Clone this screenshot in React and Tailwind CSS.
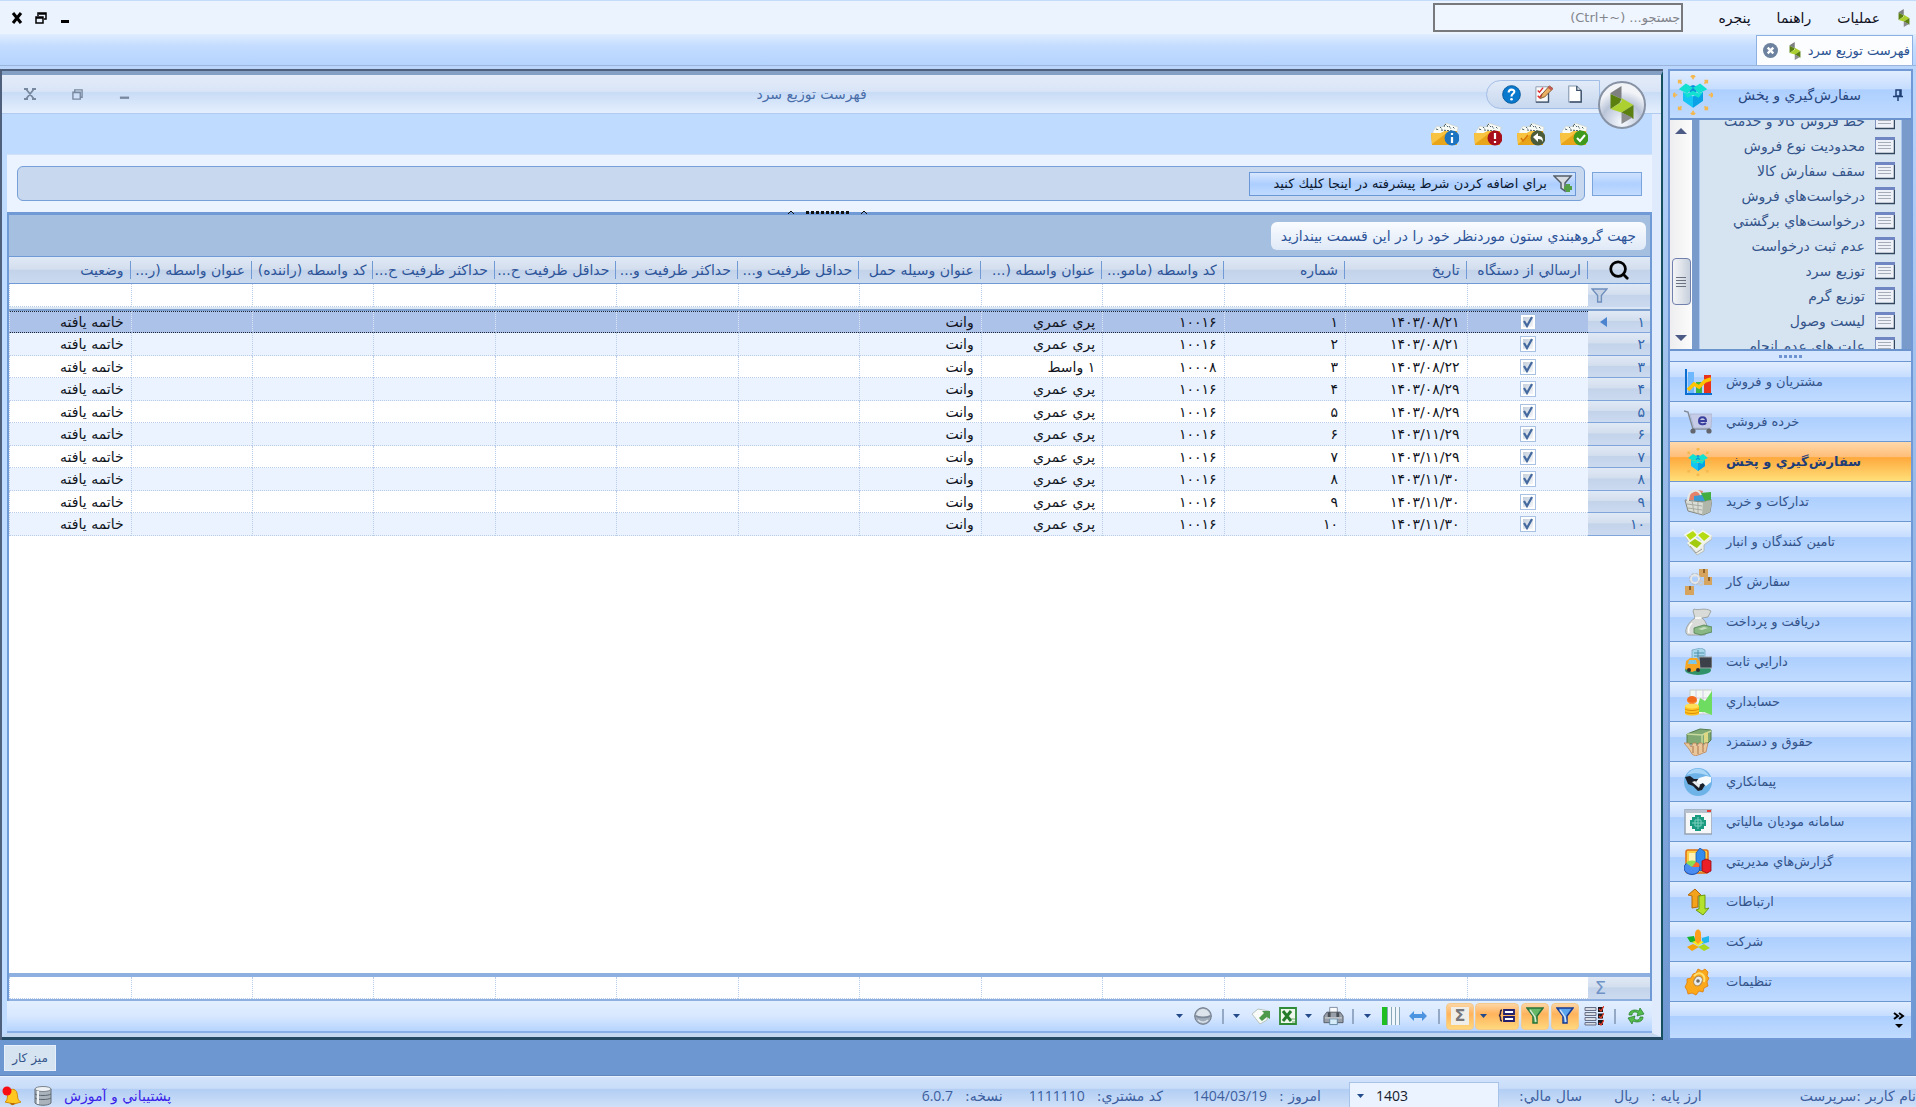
import { Search } from "lucide-react";

const modules = [
  { label: "مشتريان و فروش", icon: "sales" },
  { label: "خرده فروشي", icon: "cart" },
  { label: "سفارش‌گيري و پخش", icon: "box", active: true },
  { label: "تداركات و خريد", icon: "basket" },
  { label: "تامين كنندگان و انبار", icon: "pallets" },
  { label: "سفارش كار", icon: "workOrder" },
  { label: "دريافت و پرداخت", icon: "moneyBag" },
  { label: "دارايي ثابت", icon: "assets" },
  { label: "حسابداري", icon: "accounting" },
  { label: "حقوق و دستمزد", icon: "payroll" },
  { label: "پيمانكاري", icon: "contract" },
  { label: "سامانه موديان مالياتي", icon: "tax" },
  { label: "گزارش‌هاي مديريتي", icon: "reports" },
  { label: "ارتباطات", icon: "links" },
  { label: "شركت", icon: "company" },
  { label: "تنظيمات", icon: "settings" },
];

const treeItems = [
  "خط فروش كالا و خدمت",
  "محدوديت نوع فروش",
  "سقف سفارش كالا",
  "درخواست‌هاي فروش",
  "درخواست‌هاي برگشتي",
  "عدم ثبت درخواست",
  "توزيع سرد",
  "توزيع گرم",
  "ليست وصول",
  "علت هاي عدم انجام",
];

const columns = [
  "ارسالي از دستگاه",
  "تاريخ",
  "شماره",
  "كد واسطه (مامو...",
  "عنوان واسطه (...",
  "عنوان وسيله حمل",
  "حداقل ظرفيت و...",
  "حداكثر ظرفيت و...",
  "حداقل ظرفيت ح...",
  "حداكثر ظرفيت ح...",
  "كد واسطه (راننده)",
  "عنوان واسطه (ر...",
  "وضعيت",
];

const rows = [
  { no: "۱", date: "۱۴۰۳/۰۸/۲۱", code: "۱۰۰۱۶", agent: "پري عمري" },
  { no: "۲", date: "۱۴۰۳/۰۸/۲۱", code: "۱۰۰۱۶", agent: "پري عمري" },
  { no: "۳", date: "۱۴۰۳/۰۸/۲۲", code: "۱۰۰۰۸", agent: "۱ واسط" },
  { no: "۴", date: "۱۴۰۳/۰۸/۲۹", code: "۱۰۰۱۶", agent: "پري عمري" },
  { no: "۵", date: "۱۴۰۳/۰۸/۲۹", code: "۱۰۰۱۶", agent: "پري عمري" },
  { no: "۶", date: "۱۴۰۳/۱۱/۲۹", code: "۱۰۰۱۶", agent: "پري عمري" },
  { no: "۷", date: "۱۴۰۳/۱۱/۲۹", code: "۱۰۰۱۶", agent: "پري عمري" },
  { no: "۸", date: "۱۴۰۳/۱۱/۳۰", code: "۱۰۰۱۶", agent: "پري عمري" },
  { no: "۹", date: "۱۴۰۳/۱۱/۳۰", code: "۱۰۰۱۶", agent: "پري عمري" },
  { no: "۱۰", date: "۱۴۰۳/۱۱/۳۰", code: "۱۰۰۱۶", agent: "پري عمري" },
];

const glossy =
  "bg-[linear-gradient(#e1edff,#c6ddff_38%,#adcfff_40%,#c0dbff)]";
const silver =
  "bg-[linear-gradient(#e0e9f5,#d3deee_45%,#c3d3ea_50%,#cbdaef)]";

const moduleIcons = {
  sales: (
    <>
      <path d="M2 1v25h26" fill="none" stroke="#0a6fd0" strokeWidth="2" />
      <path d="M4 4h6v21H4z" fill="#6db8ff" />
      <path d="M12 14h6v11h-6z" fill="#39b54a" />
      <path d="M20 7h7v18h-7z" fill="#e8341c" />
      <path d="m4 22 6-6 5 3 6-6 6-2" fill="none" stroke="#ffc400" strokeWidth="3.500" />
    </>
  ),
  cart: (
    <>
      <path d="m0 3 4 1 5 17h17" fill="none" stroke="#858b96" strokeWidth="1.500" />
      <path d="M6 6h22l-1 14H10z" fill="#c5cbe6" stroke="#aab1ca" strokeWidth=".7" />
      <path d="M15 13h7c0-5-7-5-7 0 0 4 5 4 7 2" fill="none" stroke="#3a3f9e" strokeWidth="2" />
      <circle cx="9" cy="23" r="2.600" fill="#63666c" />
      <circle cx="25" cy="23" r="2.600" fill="#63666c" />
    </>
  ),
  box: (
    <>
      <path d="m7 12 7 3 7-3v6l-7 5-7-5z" fill="#16c4f4" />
      <path d="m14 15 7-3v6l-7 5z" fill="#0aa1e6" />
      <path d="m9 9 5-2 5 2-5 5z" fill="#0d8fdc" />
      <path d="m9 6 5 3-4 4-6-3zM19 6l-5 3 4 4 6-3z" fill="#12e0d0" />
      <path d="m7 12 3 1 4-2 4 2 3-1-3 4-4-2-4 2z" fill="#12e0d0" />
      <path
        d="M14 3V0m-1.500 1.500L14 0l1.500 1.500M14 25v3m-1.500-1.500L14 28l1.500-1.500M3 14H0m1.500-1.500L0 14l1.500 1.500M25 14h3m-1.500-1.500L28 14l-1.500 1.500M6 6 4 4m0 2V4h2m16 2 2-2m-2 0h2v2M6 22l-2 2m0-2v2h2m16-2 2 2m-2 0h2v-2"
        fill="none"
        stroke="#f5b84e"
        strokeWidth="1.200"
      />
    </>
  ),
  basket: (
    <>
      <path d="m6 6 8-4 5 1-3 9H5z" fill="#e5826a" />
      <path d="m16 5 11-1v8l-10 2z" fill="#43ad3f" />
      <path d="m10 8 8-1 3 6-11 1z" fill="#3c9bd2" />
      <path d="m1 12 18 2 9-2-2 12-7 3L4 23z" fill="#d9ddd6" stroke="#83877e" />
      <path d="m19 14-1 13 8-3 2-12z" fill="#b1b6ab" />
      <path d="m3 16 15 2M4 20l14 2M8 13l2 11M14 14v12" stroke="#a6aaa0" fill="none" />
      <path d="M4 13C4 2 14-1 17 7" fill="none" stroke="#e6e8e4" strokeWidth="2" />
    </>
  ),
  pallets: (
    <>
      <path d="m1 8 4 6-1 3 9 10 7-4v-6l8-6V8l-7 5-4-1-5 7-8-8-3-3z" fill="#eceeea" stroke="#a8b0a3" strokeWidth=".7" />
      <path d="m1 7 8-5 5 5-8 6z" fill="#b5dc12" stroke="#f4f6ea" strokeWidth="1.500" />
      <path d="m13 7 6-4 8 5-7 6z" fill="#b5dc12" stroke="#f4f6ea" strokeWidth="1.500" />
      <path d="m4 15 7-5 8 5-6 6z" fill="#a2cb10" stroke="#f4f6ea" strokeWidth="1.500" />
      <path d="m6 18 6 7 6-4" fill="none" stroke="#9a9f94" />
    </>
  ),
  workOrder: (
    <>
      <path d="M15 1h9v8h-9zM20 9h8v8h-8zM1 18h9v9H1z" fill="#d6a45c" />
      <path d="M19 1h2v4h-2zM24 9h2v4h-2zM5 18h2v4H5z" fill="#8f612b" />
      <circle cx="11" cy="11" r="4.500" fill="none" stroke="#b9bec4" strokeWidth="3" strokeDasharray="2.500 1" />
      <circle cx="11" cy="11" r="4" fill="none" stroke="#e4e6e8" strokeWidth="2" />
      <circle cx="17" cy="15" r="2" fill="none" stroke="#c6cacf" strokeWidth="2" />
    </>
  ),
  moneyBag: (
    <>
      <path d="M10 1c4 2 11-2 17 2l-3 6-6 1c6 5 6 11 3 17H4C-1 25 3 15 11 10L9 3z" fill="#d8dbd7" stroke="#92968f" strokeWidth=".8" />
      <path d="M11 10h6M8 15c-4 4-4 7-3 10" fill="none" stroke="#fff" strokeWidth="1.500" />
      <path d="m10 20 10-3 8 2v5l-11 3-7-2z" fill="#8ab884" stroke="#4e8050" strokeWidth=".8" />
      <path d="m14 21 6-2 4 1-6 2z" fill="#c6ddbf" />
    </>
  ),
  assets: (
    <>
      <ellipse cx="14" cy="22" rx="13" ry="5" fill="#2f9268" />
      <path d="M8 2 17 0l4 2v14H8z" fill="#a8d7ec" stroke="#5d96b1" strokeWidth=".6" />
      <path d="M10 5h10M10 8h10M14 2v12" stroke="#4f8eab" />
      <path d="M15 9h13v11H16z" fill="#3c4048" stroke="#9ea2a8" />
      <path d="m2 13 4-3h7l3 4v7l-8 3-7-3z" fill="#f6a623" />
      <path d="M5 12h7l1 4H4z" fill="#7cc6ea" />
      <circle cx="5" cy="22" r="2" fill="#333" />
      <circle cx="14" cy="22" r="2" fill="#333" />
    </>
  ),
  accounting: (
    <>
      <path d="M6 2h22v24H6z" fill="#f4f8f4" stroke="#c6cdc6" />
      <path d="M12 2v24M19 2v24M6 10h22" stroke="#d0c8e0" />
      <path d="m16 10 5 3 7-10v24l-8-3h-8z" fill="#6edc60" />
      <path d="M1 18h14v8c-3 2-11 2-14 0z" fill="#ffc423" />
      <ellipse cx="8" cy="18" rx="7" ry="2.500" fill="#ffdf58" />
      <path d="M1 21c3 2 11 2 14 0M1 24c3 2 11 2 14 0" fill="none" stroke="#dc8d06" />
      <ellipse cx="8" cy="12" rx="5" ry="4" fill="#f26a1b" />
      <path d="M3 13c2 3 8 3 10 0" fill="none" stroke="#ffad42" />
    </>
  ),
  payroll: (
    <>
      <path d="m3 6 13-5 11 1v10l-4 4H3z" fill="#7fa873" stroke="#557d4c" />
      <path d="m3 6 15 1 9-4M18 7v9" fill="none" stroke="#c8d99d" strokeWidth="1.500" />
      <path d="m20 5 4-1v10l-4 1z" fill="#dcd884" />
      <path d="M0 15h5l2 4 2-4h3l1 3 2-3h3l1 3 2-3h3l-2 9-3 1-2 1-3 1-3 1-3-2-3-5z" fill="#e9c79a" stroke="#b9855a" strokeWidth=".8" />
      <path d="M9 18v7m5-7v8m5-8v6" stroke="#a8754c" />
    </>
  ),
  contract: (
    <>
      <circle cx="14" cy="14" r="14" fill="#6eb3e8" />
      <path d="M3 7c5-9 18-8 22 1-7-3-15-4-22-1z" fill="#a9d6f6" />
      <path d="m1 9 5-1 4 3h5l6 6-3 5-4 1-5-5-5-2z" fill="#1a1f27" />
      <path d="m27 9-5-1-7 2-3 4 3 3 4-2 3 3 5-4z" fill="#f7fafc" />
      <path d="m8 14 3-1 5 4-1 3z" fill="#e9edf0" />
    </>
  ),
  tax: (
    <>
      <path d="M1 2h27v24H1z" fill="#f5f7f8" stroke="#97a4b2" strokeWidth="1.500" />
      <path d="M1 2h27v3H1z" fill="#b9c3cf" />
      <path d="M23 2h4v2h-4z" fill="#e23c34" />
      <path d="M11 7h6v2h3v3h2v6h-2v3h-3v2h-6v-2H8v-3H6v-6h2V9h3z" fill="#1a9a80" />
      <path d="M11 12h6v6h-6zM14 9v12M8 15h12" fill="none" stroke="#7dd1bf" />
    </>
  ),
  reports: (
    <>
      <rect x="2" y="2" width="22" height="23" rx="2" fill="#ffcf45" stroke="#df6f12" strokeWidth="1.500" />
      <path d="M5 5h15v15H5z" fill="#fff2b4" />
      <path d="m12 5 4-5 5 4v17l-4 2-5-2z" fill="#328cf0" stroke="#1556ac" strokeWidth=".8" />
      <path d="m18 13 4-2 5 2v10l-4 2-5-2z" fill="#ea1f28" stroke="#960910" strokeWidth=".8" />
      <ellipse cx="8" cy="20" rx="8" ry="6.500" fill="#4b8cf0" stroke="#174fae" />
      <path d="M8 19 2 15c3-3 8-3 10-1z" fill="#8be052" />
      <path d="m8 19 4-5c4 1 4 4 3 5z" fill="#ff6a2a" />
    </>
  ),
  links: (
    <>
      <path d="m4 7 7-6 6 6-3 1v11l-6 1V8z" fill="#f3a21c" stroke="#b3690c" />
      <path d="m15 8 6-1v14l4-1-6 7-7-5 3-1z" fill="#b4e22b" stroke="#6c9a12" />
    </>
  ),
  company: (
    <>
      <path d="m3 9 7-1 2 7-6-1z" fill="#18b52c" />
      <path d="m18 10 7-2v6l-7 2z" fill="#22b6ec" />
      <path d="m3 19 6-3 6 3-7 4z" fill="#f5a40c" />
      <path d="m14 19 6-3 6 4-6 3z" fill="#aad81f" />
      <path d="m8 14 6-2 6 2-6 4z" fill="#f8e71a" />
      <path d="M11 6c0-6 6-6 6 0v7l-3 3-3-3z" fill="#ff9e1a" />
    </>
  ),
  settings: (
    <>
      <path d="m9 6 3-1 2-4 4 2 3-2 3 3-1 4 2 2-2 4 1 4-4 2-1 4-4-1-3 4-4-2-4 1-1-4-2-3 2-4v-4l4-1z" fill="#fba91a" stroke="#e07b08" strokeWidth=".8" />
      <path d="M10 8c6-6 12-1 10 6" fill="none" stroke="#ffdf70" strokeWidth="2" />
      <ellipse cx="14" cy="13" rx="4" ry="5" fill="#e8ecef" stroke="#a5865a" transform="rotate(30 14 13)" />
      <circle cx="14" cy="13" r="1.800" fill="#6f6a60" />
    </>
  ),
};

function ModuleIcon({ name, className = "size-7" }) {
  return (
    <svg viewBox="0 0 28 28" className={`shrink-0 ${className}`} aria-hidden="true">
      {moduleIcons[name]}
    </svg>
  );
}

function Logo({ className }) {
  return (
    <svg viewBox="0 0 24 38" className={className} aria-hidden="true">
      <path d="M.5 7 11.500 0v13L.5 8z" fill="#7d7f80" />
      <path d="m.5 8 11 5-2 4-9 6z" fill="#5b8010" />
      <path d="m11.500 12 12 7-12 7.500-11-3.500 11-7z" fill="#acd02f" />
      <path d="M23.500 19v14l-12-6.500z" fill="#5b8010" />
      <path d="m11.500 26.500 11 5-11 6.500z" fill="#8a8c8e" />
    </svg>
  );
}

function ListIcon() {
  return (
    <svg viewBox="0 0 20 18" className="h-[18px] w-5 shrink-0" aria-hidden="true">
      <path d="M.5.5h19v16H.5z" fill="#eef2f8" stroke="#8293bd" />
      <path d="M0 0h20v3H0z" fill="#6f86c2" />
      <path d="M3 5.500h13M3 8.500h13M3 11.500h13" stroke="#a6adb9" />
      <path d="M0 16.500h19.500V3" fill="none" stroke="#33485f" strokeWidth="1.500" />
    </svg>
  );
}

function Folder({ children, label }) {
  return (
    <button type="button" aria-label={label} className="size-7">
      <svg viewBox="0 0 28 28" className="size-7">
        <path d="m2 11 4-5 5 1 4-4 12 4-1 8H2z" fill="#f8faf6" stroke="#c8ccc4" strokeWidth=".6" />
        <path d="m5 9 3 1m1-3 2 2m2-2 1-3 3 3m1-1 2 3m2-2 2 2m-14 1 12 1" stroke="#47606b" fill="none" strokeDasharray="2 1" />
        <path d="M0 13h10l4-2h12v14H1z" fill="#e9a51a" />
        <path d="M0 13h10l4-2h4L1 24z" fill="#f8c340" />
        {children}
      </svg>
    </button>
  );
}

function Caret() {
  return (
    <svg viewBox="0 0 7 4" className="h-1 w-[7px]" aria-hidden="true">
      <path d="M0 0h7L3.500 4z" fill="#234a8b" />
    </svg>
  );
}

function Divider() {
  return (
    <span className="flex w-[14px] shrink-0 justify-center">
      <span className="h-[15px] w-[2px] bg-[#93a9c6]" />
    </span>
  );
}

function ToolButton({ label, active, wide, children }) {
  return (
    <button
      type="button"
      aria-label={label}
      className={`flex h-[27px] shrink-0 items-center justify-center ${wide ? "w-11 gap-[11px]" : "w-7"} ${
        active
          ? "rounded-sm border border-[#f3c98c] bg-[linear-gradient(#fdd5a4,#ffb35c_40%,#ffd87e)]"
          : ""
      }`}
    >
      {children}
    </button>
  );
}

function Funnel({ light, dark }) {
  return (
    <svg viewBox="0 0 18 18" className="size-[18px]" aria-hidden="true">
      <path d="M1 1h16l-6 8v7H7V9z" fill={light} stroke={dark} strokeWidth="1.500" />
      <path d="m4 3 5 7 1 5" fill="none" stroke="#fff" strokeOpacity=".7" strokeWidth="1.500" />
    </svg>
  );
}

function MenuBar() {
  return (
    <header className="flex h-[34px] shrink-0 items-center border-t border-[#c5dbfa] bg-[#ebf3ff] ps-[6px] text-sm text-[#10101c]">
      <Logo className="h-[18px] w-3" />
      <nav className="flex items-center gap-[26px] ps-[18px]">
        <button type="button">عمليات</button>
        <button type="button">راهنما</button>
        <button type="button">پنجره</button>
      </nav>
      <input
        type="text"
        aria-label="جستجو"
        placeholder={"جستجو... (Ctrl+~\u200e)"}
        className="ms-[35px] h-[29px] w-[250px] border-2 border-[#77797d] bg-[#f0f6ff] px-px text-[13px] placeholder:text-[#82858c]"
      />
      <div className="ms-auto flex items-center gap-3 pe-[11px] text-black">
        <button type="button" aria-label="كوچك كردن" className="size-3">
          <svg viewBox="0 0 12 12" className="size-3"><path d="M2 9.500h8" stroke="currentColor" strokeWidth="3" /></svg>
        </button>
        <button type="button" aria-label="بازگرداندن" className="size-3">
          <svg viewBox="0 0 12 12" className="size-3"><path d="M3 4V1h8v6H9M1 5h7v6H1zM1 6h7M4 2h7" fill="none" stroke="currentColor" strokeWidth="1.500" /></svg>
        </button>
        <button type="button" aria-label="بستن" className="size-3">
          <svg viewBox="0 0 12 12" className="size-3"><path d="m2 1 8 10M10 1 2 11" stroke="currentColor" strokeWidth="3" /></svg>
        </button>
      </div>
    </header>
  );
}

function TabStrip() {
  return (
    <div className="flex h-8 shrink-0 items-end border-b border-[#9ab4dc] bg-[linear-gradient(#e0edff,#c3dcff_40%,#b5d4ff)] ps-[3px]">
      <div className="flex h-[30px] w-[157px] items-center gap-[7px] border border-[#8fb0e3] border-b-0 bg-[#fbfdff] ps-[2px] text-[13px] text-[#2c5292]">
        <span className="whitespace-nowrap">فهرست توزيع سرد</span>
        <Logo className="h-[18px] w-3 shrink-0" />
        <button type="button" aria-label="بستن زبانه" className="ms-1 shrink-0">
          <svg viewBox="0 0 16 16" className="size-[15px]">
            <circle cx="8" cy="8" r="8" fill="#6d829f" />
            <path d="m5 5 6 6m0-6-6 6" stroke="#fff" strokeWidth="2.500" />
          </svg>
        </button>
      </div>
    </div>
  );
}

function Sidebar() {
  return (
    <aside className="ms-[3px] flex w-[245px] shrink-0 flex-col border-2 border-[#7099d5]">
      <div className={`flex h-[47px] shrink-0 items-center ps-2 text-sm text-[#29477f] ${glossy}`}>
        <button type="button" aria-label="سنجاق">
          <svg viewBox="0 0 10 12" className="h-3 w-[10px]">
            <path d="M3 1h5v6H3zM0 7.500h10M5 8v4M7 1v6" fill="none" stroke="#1e3f74" strokeWidth="1.500" />
          </svg>
        </button>
        <h2 className="ms-8 whitespace-nowrap">سفارش‌گيري و پخش</h2>
        <ModuleIcon name="box" className="ms-auto me-[3px] size-10" />
      </div>

      <div className="flex h-[233px] shrink-0 border-y-2 border-[#6b93cd] bg-[#789bcb] ps-[9px]">
        <ul className="flex-1 overflow-hidden border-x border-[#a9c7ee] bg-[#d6e4f2]">
          {treeItems.map((item, index) => (
            <li key={item} className={index === 0 ? "-mt-3" : ""}>
              <a href="#" className="flex h-[25px] items-center gap-[10px] ps-[6px] text-sm whitespace-nowrap text-[#34548a]">
                <ListIcon />
                {item}
              </a>
            </li>
          ))}
        </ul>
        <div className="ms-[7px] flex w-[22px] flex-col items-center bg-[linear-gradient(90deg,#eeeef0,#fcfcfc)] py-2">
          <svg viewBox="0 0 12 6" className="h-[6px] w-3"><path d="m0 6 6-6 6 6z" fill="#4c5a86" /></svg>
          <div className="mt-[124px] flex h-[47px] w-[19px] flex-col items-center justify-center gap-[2px] rounded-sm border border-[#7280ae] bg-[linear-gradient(90deg,#f3f4f6,#dfe3ea_50%,#c6cfdb)]">
            <span className="h-px w-[10px] bg-[#6b7280]" />
            <span className="h-px w-[10px] bg-[#6b7280]" />
            <span className="h-px w-[10px] bg-[#6b7280]" />
            <span className="h-px w-[10px] bg-[#6b7280]" />
          </div>
          <svg viewBox="0 0 12 6" className="mt-auto h-[6px] w-3"><path d="m0 0 6 6 6-6z" fill="#4c5a86" /></svg>
        </div>
      </div>

      <div className="flex h-[10px] shrink-0 items-center justify-center gap-[2px] bg-[#d3e5ff]">
        <span className="size-[3px] bg-[#6d94d0]" />
        <span className="size-[3px] bg-[#6d94d0]" />
        <span className="size-[3px] bg-[#6d94d0]" />
        <span className="size-[3px] bg-[#6d94d0]" />
        <span className="size-[3px] bg-[#6d94d0]" />
      </div>

      <nav className="flex flex-col">
        {modules.map((item) => (
          <button
            key={item.label}
            type="button"
            className={`flex h-10 items-center justify-end gap-[14px] border-t border-[#6d97d3] pe-[14px] text-[13px] whitespace-nowrap ${
              item.active
                ? "bg-[linear-gradient(#ffd9ab,#ffbe78_38%,#ffa93c_40%,#ffe07a)] font-bold text-[#1f3d76]"
                : `text-[#34548a] ${glossy}`
            }`}
          >
            {item.label}
            <ModuleIcon name={item.icon} />
          </button>
        ))}
      </nav>
      <div className={`flex flex-1 items-center border-t border-[#6d97d3] ps-[6px] ${glossy}`}>
        <button type="button" aria-label="موارد بيشتر">
          <svg viewBox="0 0 12 18" className="h-[18px] w-3">
            <path d="m1 2 4 3-4 3m5-6 4 3-4 3" fill="none" stroke="#000" strokeWidth="2" />
            <path d="M2 13h8l-4 4z" fill="#000" />
          </svg>
        </button>
      </div>
    </aside>
  );
}

function TitleBar() {
  return (
    <div className="relative flex h-[39px] shrink-0 items-center border-b border-[#b1cbf0] bg-[linear-gradient(#e3ebf8,#d9e5f7_43%,#c9dcf6_46%,#e4effd)] ps-[61px]">
      <div className="flex h-[29px] w-[114px] items-center justify-start gap-[14px] rounded-e-full border border-[#a3bee6] bg-[linear-gradient(#e2ebf8,#c8d8ef)] ps-4">
        <button type="button" aria-label="جديد">
          <svg viewBox="0 0 18 20" className="h-[18px] w-4"><path d="M2 1h9l5 5v13H2z" fill="#fff" stroke="#8396ad" strokeWidth="1.200" /><path d="M11 1v5h5M16 6v13H3" fill="none" stroke="#3c5069" strokeWidth="1.500" /></svg>
        </button>
        <button type="button" aria-label="ويرايش">
          <svg viewBox="0 0 20 20" className="h-[18px] w-[18px]">
            <path d="M1 2h14v17H1z" fill="#f7f9fb" stroke="#8a97a8" />
            <path d="M1 19h14V9" fill="none" stroke="#3c5069" strokeWidth="1.500" />
            <path d="m3 6 2 2 4-5M3 12l2 2 3-4" fill="none" stroke="#e02d2d" strokeWidth="1.500" />
            <path d="m6 15 2-5 8-9 4 3-9 9z" fill="#e9b064" stroke="#7e5126" />
            <path d="m16 1 4 3-2 2-4-3z" fill="#c45c56" />
          </svg>
        </button>
        <button type="button" aria-label="راهنما">
          <svg viewBox="0 0 20 20" className="size-[19px]">
            <circle cx="10" cy="10" r="9.300" fill="#0879cc" stroke="#05579c" />
            <path d="M7 8c0-4 6-4 6-1 0 2-3 2-3 5" fill="none" stroke="#fff" strokeWidth="2.200" />
            <circle cx="10" cy="15" r="1.400" fill="#fff" />
          </svg>
        </button>
      </div>
      <span className="absolute start-[15px] top-[6px] z-10 flex size-12 items-center justify-center rounded-full border-2 border-[#8792a5] bg-[radial-gradient(circle_at_50%_90%,#f8fbff,#b9c4d8_45%,#f1f3f7_70%)]">
        <Logo className="h-[38px] w-6" />
      </span>
      <h1 className="absolute inset-x-0 text-center text-sm text-[#4a6ea9]">
        <span className="ps-10">فهرست توزيع سرد</span>
      </h1>
      <div className="relative ms-auto flex items-center gap-9 pe-[22px] text-[#77889f]">
        <button type="button" aria-label="كوچك كردن پنجره">
          <svg viewBox="0 0 12 12" className="size-[11px]"><path d="M1 9.500h10" stroke="currentColor" strokeWidth="2.500" /></svg>
        </button>
        <button type="button" aria-label="بازگرداندن پنجره">
          <svg viewBox="0 0 12 12" className="size-[11px]"><path d="M3 3V1h8v8H9M1 3.500h8V11H1zM1 4h8" fill="none" stroke="currentColor" strokeWidth="1.500" /></svg>
        </button>
        <button type="button" aria-label="بستن پنجره">
          <svg viewBox="0 0 12 12" className="size-3"><path d="m2 1 8 10M10 1 2 11M0 1h4M8 1h4M0 11h4M8 11h4" stroke="currentColor" strokeWidth="1.800" /></svg>
        </button>
      </div>
    </div>
  );
}

function Toolbar() {
  return (
    <div className="flex h-[41px] shrink-0 items-center gap-[15px] border-b border-[#d0e0f5] bg-[#bfdbff] ps-16">
      <Folder label="تاييد">
        <circle cx="21" cy="18" r="7.500" fill="#3f9a1c" />
        <path d="m17 18 3 3 5-6" fill="none" stroke="#fff" strokeWidth="2" />
      </Folder>
      <Folder label="برگشت">
        <path d="m4 18 2 3 5-6" fill="none" stroke="#d6780e" strokeWidth="1.500" />
        <circle cx="21" cy="18" r="7.500" fill="#4c5c39" />
        <path d="m16 17 5-4v3c4 0 5 2 5 6-1-2-2-3-5-3v3z" fill="#fff" />
      </Folder>
      <Folder label="هشدار">
        <circle cx="21" cy="18" r="7.500" fill="#a90f1b" />
        <path d="M21 13v6m0 2v2" stroke="#fff" strokeWidth="2.200" />
      </Folder>
      <Folder label="اطلاعات">
        <circle cx="21" cy="18" r="7.500" fill="#1d74c0" />
        <path d="M21 17v6m0-10v2" stroke="#fff" strokeWidth="2.200" />
      </Folder>
    </div>
  );
}

function FilterBar() {
  return (
    <div className="flex h-[57px] shrink-0 items-center gap-[7px] bg-[#eaf3ff] px-[10px]">
      <button type="button" aria-label="اعمال شرط" className="h-6 w-[50px] shrink-0 border border-[#7ba4dd] bg-[linear-gradient(#cfe2ff,#b0d0ff_50%,#c3dcff)]" />
      <div className="flex h-[35px] flex-1 items-center rounded-md border border-[#78a0d8] bg-[#c8d9ef] ps-2">
        <button
          type="button"
          className="flex h-6 items-center gap-[6px] border border-[#6b97d6] bg-[linear-gradient(#d8e7ff,#acceff_50%,#c0dbff)] ps-[2px] pe-6 text-[13px] whitespace-nowrap text-[#0b1830]"
        >
          <svg viewBox="0 0 20 18" className="h-[18px] w-5">
            <path d="M1 1h17l-6 7v8l-4-3V8z" fill="#d7dce2" stroke="#555d68" strokeWidth="1.500" />
            <path d="M15 9v8m-4-4h8" stroke="#55a047" strokeWidth="4" />
          </svg>
          براي اضافه كردن شرط پيشرفته در اينجا كليك كنيد
        </button>
      </div>
    </div>
  );
}

function Cell({ focused, children, className = "" }) {
  return (
    <td
      className={`border-e border-dotted px-[7px] ${
        focused ? "border-y border-e-[#dbe6f8] border-y-[#1c2536]" : "border-b border-[#b9cdea]"
      } ${className}`}
    >
      {children}
    </td>
  );
}

function Row({ row, index }) {
  const focused = index === 0;
  const striped = index % 2 === 1 ? "h-[23px] bg-[#eaf3ff]" : "h-[22px] bg-white";

  return (
    <tr className={focused ? "h-[22px] bg-[#adc2e9]" : striped}>
      <th scope="row" className={`border-b border-[#7fa5da] px-[5px] font-normal text-[#3366ad] ${silver}`}>
        <span className="flex items-center justify-between pe-[7px]">
          {row.no}
          {focused && (
            <svg viewBox="0 0 7 10" className="h-[10px] w-[7px]"><path d="M7 0v10L0 5z" fill="#4d84cf" /></svg>
          )}
        </span>
      </th>
      <Cell focused={focused} className="text-center">
        <span className="relative mx-auto block size-4">
          <input
            type="checkbox"
            defaultChecked
            aria-label={`ارسالي از دستگاه ${row.no}`}
            className="block size-4 appearance-none border border-[#a9c2e4] bg-[linear-gradient(135deg,#b9c6d6,#fff)] ring-2 ring-white ring-inset"
          />
          <svg viewBox="0 0 16 16" className="pointer-events-none absolute inset-0 size-4">
            <path d="m4 7 3 5 5-9" fill="none" stroke="#44699f" strokeWidth="2.200" />
          </svg>
        </span>
      </Cell>
      <Cell focused={focused}>{row.date}</Cell>
      <Cell focused={focused}>{row.no}</Cell>
      <Cell focused={focused}>{row.code}</Cell>
      <Cell focused={focused}>{row.agent}</Cell>
      <Cell focused={focused}>وانت</Cell>
      <Cell focused={focused} />
      <Cell focused={focused} />
      <Cell focused={focused} />
      <Cell focused={focused} />
      <Cell focused={focused} />
      <Cell focused={focused} />
      <Cell focused={focused}>خاتمه يافته</Cell>
    </tr>
  );
}

function Grid() {
  return (
    <section className="flex min-h-0 flex-1 flex-col border-x-2 border-t-[3px] border-[#6f9ad6] bg-white">
      <div className="flex h-[42px] shrink-0 items-center border-b border-[#6f9ad6] bg-[#a5bfe0] ps-1">
        <p className="flex h-7 items-center rounded-md bg-[linear-gradient(#fafcff,#dfe9f7)] px-[10px] text-sm whitespace-nowrap text-[#2d5499]">
          جهت گروهبندي ستون موردنظر خود را در اين قسمت بيندازيد
        </p>
      </div>

      <table className="w-full table-fixed border-separate border-spacing-0 text-start text-sm leading-5 text-[#10131c]">
        <colgroup>
          <col className="w-[62px]" />
        </colgroup>
        <thead>
          <tr className={`h-[27px] ${silver}`}>
            <th className="border-b border-[#6f9ad6]">
              <Search className="mx-auto size-[22px] text-black" strokeWidth={3} aria-label="جستجو" />
            </th>
            {columns.map((column, index) => (
              <th
                key={index}
                scope="col"
                className="overflow-hidden border-b border-[#6f9ad6] text-start text-sm font-normal whitespace-nowrap text-[#2d5499]"
              >
                <span className="block h-[18px] border-s border-[#6f9ad6] ps-[6px] leading-[18px]">{column}</span>
              </th>
            ))}
          </tr>
          <tr className="h-[23px] bg-white">
            <td className={`ps-[42px] ${silver}`}>
              <svg viewBox="0 0 18 16" className="h-[15px] w-[17px]"><path d="M1 1h16l-6 7v7H7V8z" fill="#c5d2e4" stroke="#6f8fbd" strokeWidth="1.500" /></svg>
            </td>
            {columns.map((column, index) => (
              <td key={index} className="border-e border-b border-dotted border-[#b9cdea]" />
            ))}
          </tr>
          <tr className="h-1">
            <td colSpan={14} className="border-b-2 border-[#7d9fcd] bg-[#dbe6f5]" />
          </tr>
        </thead>
        <tbody>
          {rows.map((row, index) => (
            <Row key={row.no} row={row} index={index} />
          ))}
        </tbody>
      </table>

      <table className="mt-auto w-full table-fixed border-separate border-spacing-0 border-t-4 border-b-2 border-[#8db0e0]">
        <colgroup>
          <col className="w-[62px]" />
        </colgroup>
        <tbody>
          <tr className="h-[22px]">
            <td className={`ps-11 text-lg leading-[18px] text-[#6f93c6] ${silver}`}>Σ</td>
            {columns.map((column, index) => (
              <td key={index} className="border-e border-b border-dotted border-[#b9cdea]" />
            ))}
          </tr>
        </tbody>
      </table>
    </section>
  );
}

function BottomBar() {
  return (
    <div className="flex h-[32px] shrink-0 items-center border-b-2 border-[#86afe8] bg-[linear-gradient(#e3efff,#d8e8ff_50%,#b5d4ff)] ps-[2px]">
      <ToolButton label="تازه سازي">
        <svg viewBox="0 0 18 18" className="size-[18px]">
          <path d="M2 8c0-5 6-6 10-4l1-3 4 6-7 2 1-3C8 4 5 5 5 8z" fill="#55bb4b" stroke="#2d8433" strokeWidth=".8" />
          <path d="M16 10c0 5-6 6-10 4l-1 3-4-6 7-2-1 3c3 2 6 1 6-2z" fill="#55bb4b" stroke="#2d8433" strokeWidth=".8" />
        </svg>
      </ToolButton>
      <Divider />
      <ToolButton label="ستون ها">
        <svg viewBox="0 0 20 20" className="size-5">
          <path d="M1 1.500h11v3H1zM1 6.500h11v3H1zM1 11.500h11v3H1zM1 16.500h11v2.500H1z" fill="#d8dce4" stroke="#687087" />
          <path d="M14 1h5v5h-5zM14 7.500h5v5h-5zM14 14h5v5h-5z" fill="#1a1a1e" />
          <path d="m15 3 2 2 3-5m-5 10 2 2 3-5m-5 10 2 2 3-5" fill="none" stroke="#e33a26" strokeWidth="1.300" />
        </svg>
      </ToolButton>
      <span className="w-px" />
      <ToolButton label="فيلتر" active><Funnel light="#5aa5ee" dark="#173a94" /></ToolButton>
      <span className="w-[2px]" />
      <ToolButton label="فيلتر پيشرفته" active><Funnel light="#66b867" dark="#27733a" /></ToolButton>
      <span className="w-[2px]" />
      <ToolButton label="گروه بندي" active wide>
        <svg viewBox="0 0 17 14" className="h-[14px] w-[17px]">
          <path d="M6 1h10v4H6zM6 8h10v4H6z" fill="#fff" stroke="#22206e" strokeWidth="1.800" />
          <path d="M4 1C1 1 4 6 1 6.500 4 7 1 12 4 12" fill="none" stroke="#322548" strokeWidth="1.500" />
        </svg>
        <Caret />
      </ToolButton>
      <span className="w-px" />
      <ToolButton label="جمع" active>
        <span className="flex size-[18px] items-center justify-center bg-[#f0eee9] text-base leading-none font-bold text-[#77777b]">Σ</span>
      </ToolButton>
      <Divider />
      <ToolButton label="تنظيم عرض">
        <svg viewBox="0 0 18 10" className="h-[10px] w-[18px]"><path d="m0 5 5-5v3h8V0l5 5-5 5V7H5v3z" fill="#4c94e0" /></svg>
      </ToolButton>
      <ToolButton label="قفل ستون" wide>
        <svg viewBox="0 0 18 18" className="size-[18px] shrink-0">
          <path d="M0 0h5v18H0z" fill="#20bd23" />
          <path d="M5 0h13v18H5z" fill="#eef6fc" />
          <path d="M5.500 0v18m4-18v18m4-18v18m4-18v18" stroke="#85a7b8" />
        </svg>
        <Caret />
      </ToolButton>
      <Divider />
      <ToolButton label="چاپ" wide>
        <svg viewBox="0 0 22 20" className="h-5 w-[21px] shrink-0">
          <path d="M7 1h8v7H7z" fill="#f8fafc" stroke="#82909f" />
          <path d="M4 6h14l3 4v7H1v-7z" fill="#999fa8" stroke="#555b65" />
          <path d="M5 6h3v5H5zM14 6h3v5h-3z" fill="#4a5058" />
          <path d="M7 13h8v6H7z" fill="#d6ecfa" stroke="#6586a0" />
          <path d="M2 12h18" stroke="#d9dce0" />
        </svg>
        <Caret />
      </ToolButton>
      <ToolButton label="خروجي اكسل">
        <svg viewBox="0 0 18 18" className="size-[18px]">
          <path d="M1 1h16v16H1z" fill="#eef7ec" stroke="#2f8b35" strokeWidth="1.800" />
          <path d="m4 4 8 10M12 4 4 14" stroke="#247c2b" strokeWidth="3" />
          <path d="M12 12h4M13 15h3" stroke="#6ca66c" />
        </svg>
      </ToolButton>
      <ToolButton label="ارسال" wide>
        <svg viewBox="0 0 20 18" className="h-[18px] w-5 shrink-0">
          <path d="m1 7 6-5 11 2-2 9-7 4z" fill="#f8faf8" stroke="#b7c3bd" />
          <path d="m8 11 5-5-2-2h8v8l-3-2-5 4z" fill="#4f994c" />
        </svg>
        <Caret />
      </ToolButton>
      <Divider />
      <ToolButton label="وضعيت" wide>
        <svg viewBox="0 0 18 18" className="size-[18px] shrink-0">
          <circle cx="9" cy="9" r="8.300" fill="#a0acba" stroke="#6c7683" />
          <path d="M2 8c2-8 12-8 14 0-5 2-9 2-14 0z" fill="#dde4eb" />
          <path d="M1.500 9c4 2 11 2 15 0" fill="none" stroke="#7d8998" strokeWidth="1.500" />
          <path d="M4 13c3 3 7 3 10 0" fill="none" stroke="#dbe3ec" strokeWidth="1.500" />
        </svg>
        <Caret />
      </ToolButton>
    </div>
  );
}

function MainWindow() {
  return (
    <main className="ms-[5px] flex min-w-0 flex-1 flex-col border-t-2 border-l-2 border-[#4f607c] bg-[#b9d5f8]">
      <div className="flex min-h-0 flex-1 flex-col border-t-4 border-r-2 border-b-[3px] border-t-[#839fc4] border-r-[#15505f] border-b-[#234a62]">
        <TitleBar />
        <div className="flex min-h-0 flex-1 flex-col border-s-[9px] border-e-[5px] border-b-4 border-s-[#dfebfc] border-e-[#bfdbff] border-b-[#c3d7f0]">
          <Toolbar />
          <FilterBar />
          <div className="relative flex h-0 items-center justify-center">
            <div className="absolute flex items-center gap-3 ps-1 text-[#111]">
              <svg viewBox="0 0 6 4" className="h-1 w-[6px]"><path d="m0 4 3-3 3 3" fill="none" stroke="currentColor" /></svg>
              <span className="flex gap-[2px]">
                {[1, 2, 3, 4, 5, 6, 7, 8, 9].map((dot) => (
                  <span key={dot} className="size-[3px] bg-current" />
                ))}
              </span>
              <svg viewBox="0 0 6 4" className="h-1 w-[6px]"><path d="m0 4 3-3 3 3" fill="none" stroke="currentColor" /></svg>
            </div>
          </div>
          <Grid />
          <BottomBar />
        </div>
      </div>
    </main>
  );
}

function StatusBar() {
  return (
    <footer className="flex h-[31px] shrink-0 items-center overflow-hidden border-t border-[#e6f0fe] bg-[linear-gradient(#d3e4fb,#c8dcf9_38%,#b2cef4_40%,#cfe0f8)] pt-2 text-sm whitespace-nowrap text-[#3d5fa0]">
      <span>نام كاربر :سرپرست</span>
      <span className="ms-[98px]">ارز پايه :</span>
      <span className="ms-3">ريال</span>
      <label htmlFor="fiscal-year" className="ms-8">سال مالي:</label>
      <div className="relative ms-5 flex items-center">
        <select
          id="fiscal-year"
          dir="ltr"
          className="h-7 w-[150px] appearance-none border border-[#a9c3e8] bg-[#eaf3ff] ps-[26px] font-['Open_Sans',sans-serif] text-sm text-[#161a2a]"
        >
          <option>1403</option>
        </select>
        <span className="pointer-events-none absolute left-2"><Caret /></span>
      </div>
      <span className="ms-7">امروز :</span>
      <span className="ms-3 font-['Open_Sans',sans-serif]">1404/03/19</span>
      <span className="ms-[30px]">كد مشتري:</span>
      <span className="ms-3 font-['Open_Sans',sans-serif]">1111110</span>
      <span className="ms-[26px]">نسخه:</span>
      <span className="ms-3 font-['Open_Sans',sans-serif]">6.0.7</span>
      <div className="ms-auto flex items-center pe-[2px]">
        <a href="#" className="text-[#3a22e8]">پشتيباني و آموزش</a>
        <svg viewBox="0 0 18 20" className="ms-3 h-5 w-[18px]" aria-hidden="true">
          <path d="M1 3h16v14c-3 3-13 3-16 0z" fill="#aab3bb" stroke="#626d77" />
          <ellipse cx="9" cy="3" rx="8" ry="2.500" fill="#eef1f3" stroke="#7b858e" />
          <path d="M1 8c3 2 13 2 16 0M1 12c3 2 13 2 16 0" fill="none" stroke="#59646e" />
          <path d="M4 5v13" stroke="#f0f3f5" strokeWidth="2" />
        </svg>
        <svg viewBox="0 0 20 20" className="ms-3 size-5" aria-hidden="true">
          <path d="M3 16c3-2 2-5 3-9 1-5 8-5 9 0 1 4 0 7 4 9l-7 2z" fill="#ffc71f" stroke="#d18d0a" />
          <path d="M8 17c1 3 4 3 5 0z" fill="#b96d07" />
          <circle cx="5" cy="5" r="4.500" fill="#f80d12" />
        </svg>
      </div>
    </footer>
  );
}

export default function App() {
  return (
    <div
      dir="rtl"
      className="flex h-screen flex-col overflow-hidden bg-[#6d97d1] font-['DejaVu_Sans',sans-serif]"
    >
      <MenuBar />
      <TabStrip />
      <div className="flex min-h-0 flex-1 bg-[linear-gradient(#b9d5fb,#6d97d1)] pt-[3px]">
        <Sidebar />
        <MainWindow />
      </div>
      <div className="flex h-9 shrink-0 items-center justify-end border-b border-[#6288bd] pe-1">
        <button type="button" className="h-[26px] w-[52px] border border-[#e6effa] bg-[#d6e4f2] text-xs whitespace-nowrap text-[#34548a]">
          ميز كار
        </button>
      </div>
      <StatusBar />
    </div>
  );
}
